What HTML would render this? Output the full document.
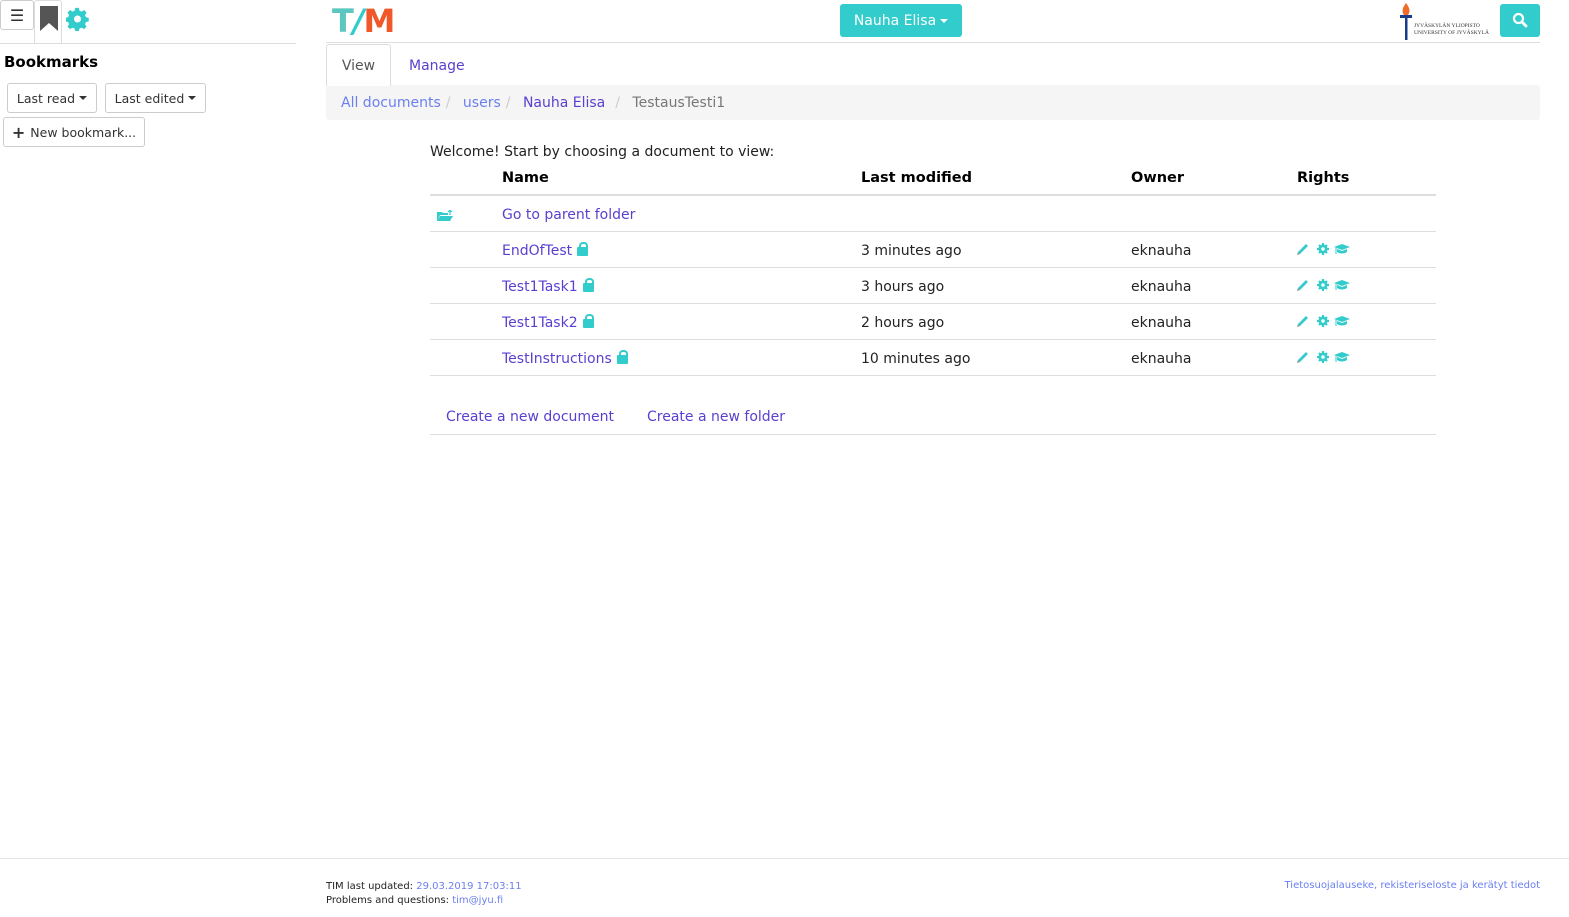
<!DOCTYPE html>
<html><head><meta charset="utf-8"><style>
*{box-sizing:border-box}
body{margin:0;width:1569px;height:917px;position:relative;font-family:"DejaVu Sans","Liberation Sans",sans-serif;font-size:14px;color:#222;background:#fff;overflow:hidden}
.a{position:absolute}
.lk{color:#5b3fcf;text-decoration:none}
.lb{color:#6b7ff0}
.btn{position:absolute;border:1px solid #ccc;border-radius:3px;background:#fff;font-size:12.5px;color:#333;display:flex;align-items:center;justify-content:center}
.caret{display:inline-block;width:0;height:0;border-left:4px solid transparent;border-right:4px solid transparent;border-top:4px solid #333;margin-left:4px;vertical-align:middle}
.row{position:absolute;left:430px;width:1006px;height:36px;border-top:1px solid #ddd}
.row span{position:absolute;top:11px}
.lock{display:inline-block;width:11px;height:9px;background:#3cc;border-radius:1px;position:relative;margin-left:5px;vertical-align:-1px}
.lock:before{content:"";position:absolute;left:2px;top:-5px;width:5px;height:5px;border:2px solid #3cc;border-bottom:none;border-radius:4px 4px 0 0}
</style></head><body>
<div class="btn" style="left:0;top:0;width:34px;height:30px;font-size:16px">&#9776;</div>
<div class="a" style="left:34px;top:0;width:28px;height:44px;border:1px solid #ddd;border-bottom:none;border-radius:3px 3px 0 0;background:#fff"></div>
<svg class="a" style="left:40px;top:6px" width="18" height="25"><path d="M0 0H18V25L9 17L0 25Z" fill="#555"/></svg>
<svg class="a" style="left:66px;top:7px" width="24" height="24" viewBox="0 0 24 24"><path d="M10 1h4l.6 3 2.4 1 2.6-1.7 2.8 2.8L20.7 8.7l1 2.4 3 .6v4l-3 .6-1 2.4 1.7 2.6-2.8 2.8-2.6-1.7-2.4 1-.6 3h-4l-.6-3-2.4-1-2.6 1.7-2.8-2.8 1.7-2.6-1-2.4-3-.6v-4l3-.6 1-2.4L1.6 6.1 4.4 3.3 7 5l2.4-1z" transform="scale(.92)" fill="#3cc"/><circle cx="11.5" cy="12" r="3.5" fill="#fff"/></svg>
<div class="a" style="left:0;top:43px;width:296px;border-top:1px solid #ddd"></div>
<div class="a" style="left:4px;top:53px;font-weight:bold;font-size:15px;color:#000">Bookmarks</div>
<div class="btn" style="left:7px;top:83px;width:90px;height:30px">Last read<span class="caret"></span></div>
<div class="btn" style="left:105px;top:83px;width:101px;height:30px">Last edited<span class="caret"></span></div>
<div class="btn" style="left:3px;top:117px;width:142px;height:30px"><b style="font-size:16px;margin-right:5px">+</b>New bookmark...</div>
<div class="a" style="left:332px;top:2px;font-family:'DejaVu Sans';font-weight:900;font-size:32px;letter-spacing:-1px"><span style="color:#5cc6c0">T</span><span style="color:#3cc;font-style:italic">/</span><span style="color:#f0582a">M</span></div>
<div class="a" style="left:840px;top:4px;width:122px;height:33px;background:#3cc;border-radius:3px;color:#fff;font-size:14px;display:flex;align-items:center;justify-content:center">Nauha Elisa<span class="caret" style="border-top-color:#fff"></span></div>
<svg class="a" style="left:1400px;top:3px" width="12" height="37"><path d="M6 0C9 4 11 8 8 12H4C1 8 3 4 6 0Z" fill="#f06a2a"/><rect x="0" y="12" width="12" height="3" fill="#1a3a8a"/><rect x="5" y="15" width="2.5" height="22" fill="#1a3a8a"/></svg>
<div class="a" style="left:1414px;top:23px;font-family:'Liberation Serif';font-size:5.5px;line-height:7px;color:#333">JYVÄSKYLÄN YLIOPISTO<br>UNIVERSITY OF JYVÄSKYLÄ</div>
<div class="a" style="left:1500px;top:4px;width:40px;height:33px;background:#3cc;border-radius:3px"></div>
<svg class="a" style="left:1512px;top:12px" width="16" height="16"><circle cx="6.5" cy="6.5" r="4.5" stroke="#fff" stroke-width="2.2" fill="none"/><path d="M10 10L14 14" stroke="#fff" stroke-width="2.8" stroke-linecap="round"/></svg>
<div class="a" style="left:326px;top:42px;width:1214px;border-top:1px solid #ddd"></div>
<div class="a" style="left:326px;top:44px;width:65px;height:42px;border:1px solid #ddd;border-bottom:none;border-radius:3px 3px 0 0;background:#fff;z-index:2;text-align:center;padding-top:13px;color:#555">View</div>
<div class="a lk" style="left:409px;top:58px">Manage</div>
<div class="a" style="left:326px;top:85px;width:1214px;height:35px;background:#f5f5f5;border-radius:3px;padding:10px 15px;color:#777"><span class="lb">All documents</span><span style="color:#ccc;padding:0 8px 0 5px">/</span> <span class="lb">users</span><span style="color:#ccc;padding:0 8px 0 5px">/</span> <span class="lk">Nauha Elisa</span><span style="color:#ccc;padding:0 8px 0 10px">/</span> TestausTesti1</div>
<div class="a" style="left:430px;top:144px">Welcome! Start by choosing a document to view:</div>
<div class="a" style="left:502px;top:170px;font-weight:bold;font-size:14.5px;color:#000">Name</div>
<div class="a" style="left:861px;top:170px;font-weight:bold;font-size:14.5px;color:#000">Last modified</div>
<div class="a" style="left:1131px;top:170px;font-weight:bold;font-size:14.5px;color:#000">Owner</div>
<div class="a" style="left:1297px;top:170px;font-weight:bold;font-size:14.5px;color:#000">Rights</div>
<div class="row" style="top:194px;border-top:2px solid #ddd"><svg style="position:absolute;left:7px;top:14px" width="16" height="11"><path d="M0 2h5l1 1h5v2H3L0 11Z M3 6h13l-3 5H0Z" fill="#3cc"/><path d="M13 0v5M11 2l2-2 2 2" stroke="#3cc" stroke-width="1.2" fill="none"/></svg><span class="lk" style="left:72px">Go to parent folder</span></div>
<div class="row" style="top:231px"><span class="lk" style="left:72px">EndOfTest<i class="lock"></i></span><span style="left:431px">3 minutes ago</span><span style="left:701px">eknauha</span></div>
<div class="row" style="top:267px"><span class="lk" style="left:72px">Test1Task1<i class="lock"></i></span><span style="left:431px">3 hours ago</span><span style="left:701px">eknauha</span></div>
<div class="row" style="top:303px"><span class="lk" style="left:72px">Test1Task2<i class="lock"></i></span><span style="left:431px">2 hours ago</span><span style="left:701px">eknauha</span></div>
<div class="row" style="top:339px"><span class="lk" style="left:72px">TestInstructions<i class="lock"></i></span><span style="left:431px">10 minutes ago</span><span style="left:701px">eknauha</span></div>
<svg class="a" style="left:1296px;top:242px" width="56" height="130">
<defs><g id="r"><path d="M1 13L2 10L10 2L12 4L4 12Z" fill="#3cc"/><path d="M1 13L2 10L4 12Z" fill="#999"/><circle cx="27" cy="7" r="4.5" fill="#3cc"/><path d="M27 1v12M21 7h12M23 3l8 8M31 3l-8 8" stroke="#3cc" stroke-width="2.2"/><circle cx="27" cy="7" r="1.8" fill="#fff"/><path d="M38 5L46 2L54 5L46 8Z M41 7v3c3 2 7 2 10 0V7L46 9Z" fill="#3cc"/><path d="M40 6v6" stroke="#3cc" stroke-width="1"/></g></defs>
<use href="#r" y="0"/><use href="#r" y="36"/><use href="#r" y="72"/><use href="#r" y="108"/></svg>
<div class="a" style="left:430px;top:375px;width:1006px;border-top:1px solid #ddd"></div>
<div class="a lk" style="left:446px;top:409px">Create a new document</div>
<div class="a lk" style="left:647px;top:409px">Create a new folder</div>
<div class="a" style="left:430px;top:434px;width:1006px;border-top:1px solid #ddd"></div>
<div class="a" style="left:0;top:858px;width:1569px;border-top:1px solid #e5e5e5"></div>
<div class="a" style="left:326px;top:880px;font-size:10px;line-height:14px;color:#222">TIM last updated: <span class="lb">29.03.2019 17:03:11</span><br>Problems and questions: <span class="lb">tim@jyu.fi</span></div>
<div class="a lb" style="right:29px;top:880px;font-size:10px">Tietosuojalauseke, rekisteriseloste ja kerätyt tiedot</div>
</body></html>
